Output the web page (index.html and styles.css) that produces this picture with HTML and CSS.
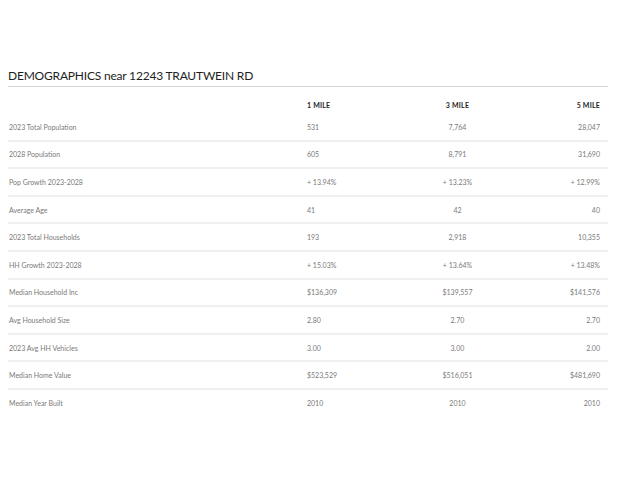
FILE: index.html
```html
<!DOCTYPE html>
<html>
<head>
<meta charset="utf-8">
<link rel="stylesheet" href="styles.css">
</head>
<body>
<div class="page">
  <h1 class="title">DEMOGRAPHICS near 12243 TRAUTWEIN RD</h1>
  <div class="table">
    <div class="row head">
      <div class="label"></div>
      <div class="c1">1 MILE</div>
      <div class="c2">3 MILE</div>
      <div class="c3">5 MILE</div>
    </div>
    <div class="row"><div class="label">2023 Total Population</div><div class="c1">531</div><div class="c2">7,764</div><div class="c3">28,047</div></div>
    <div class="row"><div class="label">2028 Population</div><div class="c1">605</div><div class="c2">8,791</div><div class="c3">31,690</div></div>
    <div class="row"><div class="label">Pop Growth 2023-2028</div><div class="c1">+ 13.94%</div><div class="c2">+ 13.23%</div><div class="c3">+ 12.99%</div></div>
    <div class="row"><div class="label">Average Age</div><div class="c1">41</div><div class="c2">42</div><div class="c3">40</div></div>
    <div class="row"><div class="label">2023 Total Households</div><div class="c1">193</div><div class="c2">2,918</div><div class="c3">10,355</div></div>
    <div class="row"><div class="label">HH Growth 2023-2028</div><div class="c1">+ 15.03%</div><div class="c2">+ 13.64%</div><div class="c3">+ 13.48%</div></div>
    <div class="row"><div class="label">Median Household Inc</div><div class="c1">$136,309</div><div class="c2">$139,557</div><div class="c3">$141,576</div></div>
    <div class="row"><div class="label">Avg Household Size</div><div class="c1">2.80</div><div class="c2">2.70</div><div class="c3">2.70</div></div>
    <div class="row"><div class="label">2023 Avg HH Vehicles</div><div class="c1">3.00</div><div class="c2">3.00</div><div class="c3">2.00</div></div>
    <div class="row"><div class="label">Median Home Value</div><div class="c1">$523,529</div><div class="c2">$516,051</div><div class="c3">$481,690</div></div>
    <div class="row last"><div class="label">Median Year Built</div><div class="c1">2010</div><div class="c2">2010</div><div class="c3">2010</div></div>
  </div>
</div>
</body>
</html>
```

FILE: styles.css
```css
html, body {
  margin: 0;
  padding: 0;
  background: #fff;
}
.page {
  width: 600px;
  padding: 68px 0 0 8px;
  font-family: Lato, "Liberation Sans", sans-serif;
}
.title {
  margin: 0;
  font-size: 12px;
  font-weight: 400;
  line-height: 15px;
  color: #1e1e1e;
  letter-spacing: -0.2px;
  padding-bottom: 3px;
  border-bottom: 1px solid #d6d6d6;
}
.table {
  display: flex;
  flex-direction: column;
}
.row {
  display: grid;
  grid-template-columns: 299px 1fr 1fr 1fr;
  align-items: center;
  height: 25.6px;
  border-bottom: 2px solid #f0f0f0;
  font-size: 7px;
  color: #7a7a7a;
  padding-right: 8px;
}
.row.head {
  height: 27px;
  border-bottom: none;
  align-items: end;
  color: #1e1e1e;
  font-weight: 700;
  letter-spacing: 0.2px;
}
.row.head > div {
  padding-bottom: 5px;
}
.row.last {
  border-bottom: none;
}
.label {
  padding-left: 1px;
}
.c1 { text-align: left; }
.c2 { text-align: center; padding-left: 8px; }
.c3 { text-align: right; }
```
